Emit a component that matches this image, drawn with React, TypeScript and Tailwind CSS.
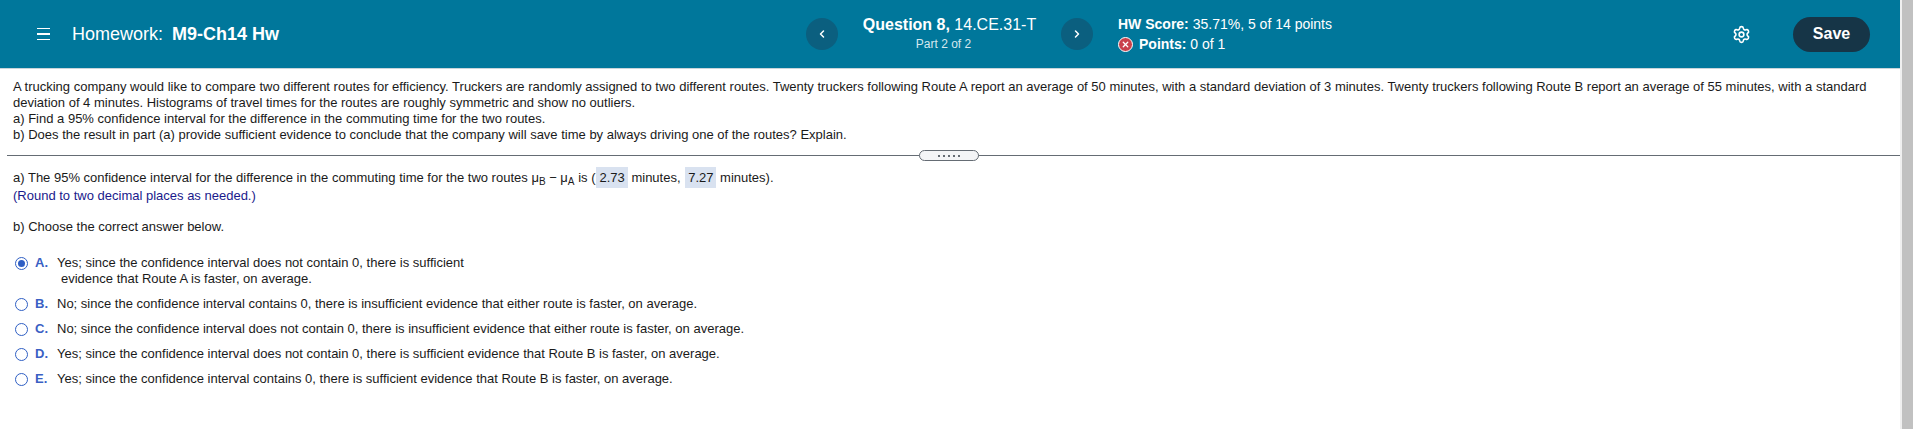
import { ChevronLeft, ChevronRight, Settings, X } from "lucide-react";

const CHOICES = [
  { letter: "A", text: "Yes; since the confidence interval does not contain 0, there is sufficient", extra: "evidence that Route A is faster, on average.", checked: true },
  { letter: "B", text: "No; since the confidence interval contains 0, there is insufficient evidence that either route is faster, on average." },
  { letter: "C", text: "No; since the confidence interval does not contain 0, there is insufficient evidence that either route is faster, on average." },
  { letter: "D", text: "Yes; since the confidence interval does not contain 0, there is sufficient evidence that Route B is faster, on average." },
  { letter: "E", text: "Yes; since the confidence interval contains 0, there is sufficient evidence that Route B is faster, on average." },
];

function NavButton({ children }: { children: React.ReactNode }) {
  return (
    <button className="w-8 h-8 shrink-0 rounded-full bg-[#0b5f7f] text-white flex items-center justify-center">
      {children}
    </button>
  );
}

function Answer({ value }: { value: string }) {
  return <span className="inline-block bg-[#d9e2f0] px-[3px] ml-[1px] leading-[21px]">{value}</span>;
}

function Radio({ checked }: { checked?: boolean }) {
  return (
    <span className="w-[13px] h-[13px] rounded-full border border-[#2f5fc4] flex items-center justify-center shrink-0 bg-white">
      {checked && <span className="w-[7px] h-[7px] rounded-full bg-[#2f5fc4]" />}
    </span>
  );
}

export default function App() {
  return (
    <div className="h-[429px] w-full flex bg-white overflow-hidden font-['Liberation_Sans',Arial,sans-serif] text-[13px] leading-[16px] text-[#1a1a1a]">
      <div className="w-[1900px] shrink-0">
        {/* Top bar */}
        <header className="h-[69px] bg-[#00779b] border-b border-[#c8d4da] text-white flex items-center pl-[37px] pr-[30px]">
          <div className="w-[35px] flex flex-col gap-[4px] shrink-0">
            <span className="block w-[13px] h-[1.5px] bg-white" />
            <span className="block w-[13px] h-[1.5px] bg-white" />
            <span className="block w-[13px] h-[1.5px] bg-white" />
          </div>
          <div className="text-[18px] w-[734px] shrink-0">
            Homework: <b className="ml-[4px]">M9-Ch14 Hw</b>
          </div>
          <NavButton><ChevronLeft size={12} strokeWidth={3} /></NavButton>
          <div className="w-[223px] text-center shrink-0">
            <div className="text-[16px] leading-[20px]"><b>Question 8,</b> 14.CE.31-T</div>
            <div className="text-[12px] leading-[17px] text-[#d5e8ef] pt-[1px] pr-[12px]">Part 2 of 2</div>
          </div>
          <NavButton><ChevronRight size={12} strokeWidth={3} /></NavButton>
          <div className="ml-[25px] text-[14px] leading-[20px]">
            <div><b>HW Score:</b> 35.71%, 5 of 14 points</div>
            <div className="flex items-center gap-[6px]">
              <span className="w-[15px] h-[15px] rounded-full bg-[#c9404a] border border-white flex items-center justify-center">
                <X size={9} strokeWidth={3.5} />
              </span>
              <span><b>Points:</b> 0 of 1</span>
            </div>
          </div>
          <Settings size={19} strokeWidth={2} className="ml-auto mr-[42px]" />
          <button className="w-[77px] h-[35px] rounded-full bg-[#163547] text-white font-bold text-[16px]">Save</button>
        </header>

        {/* Question text */}
        <div className="pl-[13px] pr-[20px] pt-[10px]">
          <p>
            A trucking company would like to compare two different routes for efficiency. Truckers are randomly assigned to two different routes. Twenty truckers following Route A report an average of 50 minutes, with a standard deviation of 3 minutes. Twenty truckers following Route B report an average of 55 minutes, with a standard deviation of 4 minutes. Histograms of travel times for the routes are roughly symmetric and show no outliers.
          </p>
          <p>a) Find a 95% confidence interval for the difference in the commuting time for the two routes.</p>
          <p>b) Does the result in part (a) provide sufficient evidence to conclude that the company will save time by always driving one of the routes? Explain.</p>
        </div>

        {/* Divider */}
        <div className="ml-[7px] mt-[12px] relative h-[1px] bg-[#656c74]">
          <div className="absolute left-[912px] top-[-5px] w-[60px] h-[11px] rounded-full border border-[#656c74] bg-[#f4f5f7] flex items-center justify-center gap-[3px]">
            <span className="w-[2px] h-[2px] bg-[#656c74]" />
            <span className="w-[2px] h-[2px] bg-[#656c74]" />
            <span className="w-[2px] h-[2px] bg-[#656c74]" />
            <span className="w-[2px] h-[2px] bg-[#656c74]" />
            <span className="w-[2px] h-[2px] bg-[#656c74]" />
          </div>
        </div>

        {/* Answers */}
        <div className="pl-[13px] pt-[11px]">
          <p className="h-[21px] leading-[21px]">
            a) The 95% confidence interval for the difference in the commuting time for the two routes
            {" "}μ<sub className="text-[10px]">B</sub> − μ<sub className="text-[10px]">A</sub> is (<Answer value="2.73" /> minutes, <Answer value="7.27" /> minutes).
          </p>
          <p className="text-[#1a1a8c]">(Round to two decimal places as needed.)</p>
          <p className="mt-[15px]">b) Choose the correct answer below.</p>
          <div className="mt-[20px] ml-[2px] flex flex-col gap-[9px]">
            {CHOICES.map((c) => (
              <div key={c.letter}>
                <div className="flex items-center">
                  <Radio checked={c.checked} />
                  <span className="ml-[7px] w-[22px] font-bold text-[#3a5fc4]">{c.letter}.</span>
                  <span>{c.text}</span>
                </div>
                {c.extra && <div className="pl-[46px]">{c.extra}</div>}
              </div>
            ))}
          </div>
        </div>
      </div>
      <div className="w-[2px] bg-[#f0f0f0]" />
      <div className="flex-1 bg-[#c1c1c1]" />
    </div>
  );
}
